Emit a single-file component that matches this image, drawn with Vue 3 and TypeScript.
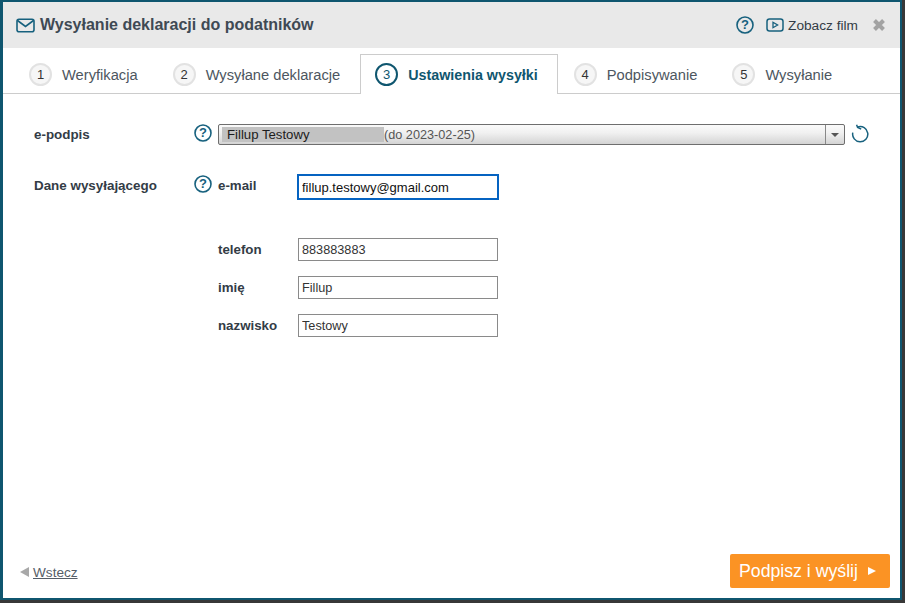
<script setup lang="ts">
const tabs = [
  { n: 1, label: 'Weryfikacja', active: false },
  { n: 2, label: 'Wysyłane deklaracje', active: false },
  { n: 3, label: 'Ustawienia wysyłki', active: true },
  { n: 4, label: 'Podpisywanie', active: false },
  { n: 5, label: 'Wysyłanie', active: false },
]
</script>

<template>
  <div class="page">
    <div class="window">
      <header class="head">
        <svg class="mail" width="19" height="15" viewBox="0 0 19 15" fill="none" stroke="#17617e" stroke-width="1.6">
          <rect x="1" y="1.2" width="17" height="12.6" rx="2" />
          <path d="M1.5 2.5 9.5 8.5 17.5 2.5" />
        </svg>
        <h1 class="title">Wysyłanie deklaracji do podatników</h1>
        <svg class="help head-help" width="18" height="18" viewBox="0 0 18 18">
          <circle cx="9" cy="9" r="8" fill="none" stroke="#17617e" stroke-width="1.6" />
          <text x="9" y="13.2" text-anchor="middle" class="q">?</text>
        </svg>
        <svg class="film" width="18" height="14" viewBox="0 0 18 14" fill="none" stroke="#17617e" stroke-width="1.5">
          <rect x="1" y="1" width="16" height="12" rx="2.5" />
          <path d="M7 4.3 11.6 7 7 9.7Z" stroke-width="1.3" />
        </svg>
        <span class="film-label">Zobacz film</span>
        <svg class="close" width="14" height="14" viewBox="0 0 14 14">
          <path d="M2.5 2.5 11.5 11.5M11.5 2.5 2.5 11.5" stroke="#a3a3a3" stroke-width="4" />
        </svg>
      </header>

      <nav class="tabs">
        <div v-for="t in tabs" :key="t.n" class="tab" :class="{ active: t.active }">
          <span class="num">{{ t.n }}</span>
          <span class="tab-label">{{ t.label }}</span>
        </div>
      </nav>

      <main class="body">
        <div class="row sign-row">
          <div class="section">e-podpis</div>
          <svg class="help" width="18" height="18" viewBox="0 0 18 18">
            <circle cx="9" cy="9" r="8" fill="none" stroke="#17617e" stroke-width="1.6" />
            <text x="9" y="13.2" text-anchor="middle" class="q">?</text>
          </svg>
          <div class="select">
            <div class="sel-value">
              <span class="sel-name">Fillup Testowy</span>
              <span class="sel-date">(do 2023-02-25)</span>
            </div>
            <div class="sel-btn"><span class="caret"></span></div>
          </div>
          <svg class="refresh" width="18" height="19" viewBox="0 0 18 19" fill="none" stroke="#17617e" stroke-width="1.5">
            <path d="M6.8 3A7.6 7.6 0 1 1 1.8 8.6" />
            <path d="M5.6 0.8 6.6 3.4 10.2 5.2" />
          </svg>
        </div>

        <div class="row mail-row">
          <div class="section">Dane wysyłającego</div>
          <svg class="help" width="18" height="18" viewBox="0 0 18 18">
            <circle cx="9" cy="9" r="8" fill="none" stroke="#17617e" stroke-width="1.6" />
            <text x="9" y="13.2" text-anchor="middle" class="q">?</text>
          </svg>
          <label class="field-label">e-mail</label>
          <input class="input focused" value="fillup.testowy@gmail.com" />
        </div>

        <div class="fields">
          <div class="field">
            <label class="field-label">telefon</label>
            <input class="input" value="883883883" />
          </div>
          <div class="field">
            <label class="field-label">imię</label>
            <input class="input" value="Fillup" />
          </div>
          <div class="field">
            <label class="field-label">nazwisko</label>
            <input class="input" value="Testowy" />
          </div>
        </div>
      </main>

      <footer class="foot">
        <span class="back-arrow"></span>
        <a class="back">Wstecz</a>
        <button class="submit">Podpisz i wyślij<span class="submit-arrow"></span></button>
      </footer>
    </div>
  </div>
</template>

<style>
html, body { margin: 0; padding: 0; background: #383838; overflow: hidden; }
</style>

<style scoped>
.page {
  width: 905px;
  height: 603px;
  background: #383838;
  font-family: "Liberation Sans", Arial, sans-serif;
  overflow: hidden;
}
.window {
  box-sizing: border-box;
  width: 902px;
  height: 600px;
  border-style: solid;
  border-color: #0f566f;
  border-width: 2px 2px 2px 3px;
  background: #fff;
  display: flex;
  flex-direction: column;
}
.head {
  height: 46px;
  background: #e9e9e9;
  display: flex;
  align-items: center;
  padding-left: 13px;
  flex: none;
}
.mail { flex: none; }
.title {
  margin: 0 0 0 5px;
  font-size: 16px;
  font-weight: 700;
  color: #3f4a54;
  flex: 1;
}
.q { font: 700 13px "Liberation Sans", Arial, sans-serif; fill: #17617e; }
.head-help { flex: none; margin-right: 12px; }
.film { flex: none; margin-right: 4px; }
.film-label { font-size: 13.7px; color: #333c46; margin-right: 14px; }
.close { margin-right: 14px; flex: none; }
.tabs {
  height: 46px;
  flex: none;
  box-sizing: border-box;
  border-bottom: 1px solid #ccc;
  display: flex;
  align-items: flex-end;
  padding-left: 10px;
}
.tab {
  box-sizing: border-box;
  height: 40px;
  margin-bottom: -1px;
  display: flex;
  align-items: center;
  padding: 0 18px 0 15px;
  border: 1px solid transparent;
  border-bottom: 0;
  color: #4d5660;
  font-size: 14.7px;
}
.tab.active {
  margin-left: 1px;
  padding: 0 19px 0 14px;
  background: #fff;
  border-color: #ccc;
  color: #0f566f;
  font-weight: 700;
  font-size: 14.3px;
}
.num {
  box-sizing: border-box;
  width: 23px;
  height: 23px;
  border-radius: 50%;
  border: 2px solid #e2e2e2;
  background: #f6f6f6;
  color: #333;
  font-size: 13px;
  font-weight: 400;
  display: flex;
  align-items: center;
  justify-content: center;
  margin-right: 10px;
  flex: none;
}
.active .num {
  border-color: #0f566f;
  background: #fff;
  color: #0f566f;
}
.body {
  flex: 1;
  padding: 29px 0 0 31px;
}
.row {
  display: flex;
  align-items: flex-start;
}
.section {
  width: 160px;
  flex: none;
  font-size: 13.4px;
  font-weight: 700;
  color: #333c46;
  line-height: 24px;
}
.help { flex: none; }
.row > .help { margin-top: 1px; }
.select {
  box-sizing: border-box;
  margin: 1px 0 0 6px;
  width: 627px;
  height: 21px;
  border: 1px solid #6e6e6e;
  border-radius: 2px;
  display: flex;
  background: linear-gradient(#fafafa, #f1f1f1 40%, #d4d4d4);
}
.sel-value {
  flex: 1;
  display: flex;
  align-items: center;
  padding: 2px 0 2px 3px;
  height: 100%;
  box-sizing: border-box;
}
.sel-name {
  box-sizing: border-box;
  width: 162px;
  height: 15px;
  line-height: 15px;
  padding-left: 5px;
  background: #c2c2c2;
  color: #1c1c1c;
  font-size: 13.2px;
}
.sel-date { color: #555; font-size: 12.7px; }
.sel-btn {
  width: 18px;
  flex: none;
  border-left: 1px solid #888;
  display: flex;
  align-items: center;
  justify-content: center;
}
.caret {
  width: 0;
  height: 0;
  border-left: 4px solid transparent;
  border-right: 4px solid transparent;
  border-top: 4px solid #555;
}
.refresh { margin: 1px 0 0 6px; flex: none; }
.mail-row { margin-top: 27px; }
.field-label {
  font-size: 13.3px;
  font-weight: 700;
  color: #333c46;
  line-height: 24px;
  width: 80px;
  flex: none;
}
.mail-row .field-label { margin-left: 6px; }
.input {
  box-sizing: border-box;
  width: 200px;
  height: 23px;
  border: 1px solid #8a8a8a;
  padding: 0 3px;
  margin: 0;
  font: 12.7px "Liberation Sans", Arial, sans-serif;
  color: #333;
  background: #fff;
  outline: 0;
  border-radius: 0;
}
.input.focused {
  width: 202px;
  height: 26px;
  margin: 0 0 0 -1px;
  border: 2px solid #0563c1;
  color: #111;
  font-size: 13px;
}
.fields {
  margin: 38px 0 0 184px;
  display: flex;
  flex-direction: column;
  gap: 15px;
}
.field { display: flex; align-items: center; height: 23px; }
.foot {
  flex: none;
  display: flex;
  align-items: center;
  padding: 0 10px 10px 17px;
}
.back-arrow {
  width: 0;
  height: 0;
  border-top: 5.5px solid transparent;
  border-bottom: 5.5px solid transparent;
  border-right: 9px solid #a8a8a8;
  margin: 2px 4px 0 0;
}
.back {
  font-size: 13.6px;
  color: #555e68;
  text-decoration: underline;
  flex: 1;
  margin-top: 2px;
}
.submit {
  box-sizing: border-box;
  width: 160px;
  height: 34px;
  border: 0;
  border-radius: 2px;
  background: #fb9324;
  color: #fff;
  font: 17.7px "Liberation Sans", Arial, sans-serif;
  display: flex;
  align-items: center;
  padding: 0 0 0 9px;
}
.submit-arrow {
  width: 0;
  height: 0;
  margin-left: 10px;
  border-top: 4.5px solid transparent;
  border-bottom: 4.5px solid transparent;
  border-left: 8px solid #fff;
}
</style>
